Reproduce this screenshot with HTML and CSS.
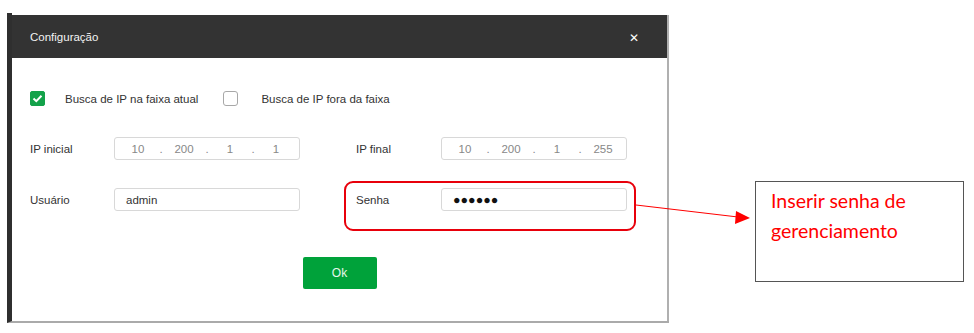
FILE: index.html
```html
<!DOCTYPE html>
<html>
<head>
<title>Configuração</title>
<meta name="viewport" content="width=device-width, initial-scale=1.0">
<link rel="stylesheet" href="styles.css">
</head>
<body>

<div class="page">
  <div class="shot">
    <div class="dialog">
      <div class="dialog-header">
        <span class="dialog-title">Configuração</span>
        <span class="dialog-close">&#x2715;</span>
      </div>

      <div class="dialog-body">
        <div class="options">
          <label class="option">
            <span class="check checked">
              <svg width="11" height="9" viewBox="0 0 11 9"><path d="M1.5 4.5 L4.3 7.2 L9.5 1.8" fill="none" stroke="#fff" stroke-width="2"/></svg>
            </span>
            <span class="option-text">Busca de IP na faixa atual</span>
          </label>
          <label class="option">
            <span class="check"></span>
            <span class="option-text">Busca de IP fora da faixa</span>
          </label>
        </div>

        <div class="row">
          <div class="field">
            <span class="field-label">IP inicial</span>
            <div class="ip-box">
              <span class="seg">10</span><span class="dot">.</span>
              <span class="seg">200</span><span class="dot">.</span>
              <span class="seg">1</span><span class="dot">.</span>
              <span class="seg">1</span>
            </div>
          </div>
          <div class="field field-right">
            <span class="field-label">IP final</span>
            <div class="ip-box">
              <span class="seg">10</span><span class="dot">.</span>
              <span class="seg">200</span><span class="dot">.</span>
              <span class="seg">1</span><span class="dot">.</span>
              <span class="seg">255</span>
            </div>
          </div>
        </div>

        <div class="row row-user">
          <div class="field">
            <span class="field-label">Usuário</span>
            <div class="text-box">admin</div>
          </div>
          <div class="field field-right field-senha">
            <span class="field-label">Senha</span>
            <div class="text-box pass">&#9679;&#9679;&#9679;&#9679;&#9679;&#9679;</div>
            <div class="highlight"></div>
          </div>
        </div>

        <div class="actions">
          <button class="btn-ok">Ok</button>
        </div>
      </div>
    </div>
  </div>

  <div class="callout">
    Inserir senha de<br>gerenciamento
  </div>

  <!-- seta da anotação -->
  <svg class="arrow" width="974" height="333" viewBox="0 0 974 333">
    <line x1="636" y1="205" x2="738" y2="217" stroke="#f00" stroke-width="1"/>
    <polygon points="736,211 750,218 735,224" fill="#f00"/>
  </svg>
</div>

</body>
</html>
```

FILE: styles.css
```css
body {
  margin: 0;
  background: #fff;
  font-family: "Liberation Sans", Arial, sans-serif;
}

.page {
  position: relative;
  display: flex;
  align-items: flex-start;
  padding: 13px 0 0 7px;
  height: 333px;
  box-sizing: border-box;
}

/* janela de fundo (borda escura) */
.shot {
  border-left: 5px solid #2f2f2f;
  padding-top: 2px;
  border-bottom: 2px solid #aaa;
}

.dialog {
  width: 657px;
  background: #fff;
  border-right: 2px solid #b0b0b0;
  box-sizing: border-box;
}

.dialog-header {
  height: 43px;
  background: #333;
  color: #f2f2f2;
  font-size: 11.5px;
  display: flex;
  align-items: center;
  justify-content: space-between;
  padding: 0 28px 0 18px;
}

.dialog-close {
  font-size: 12px;
  color: #fff;
  margin-top: 3px;
}

.dialog-body {
  padding: 33px 0 32px 18px;
  font-size: 11.5px;
  color: #333;
}

.options {
  display: flex;
  align-items: center;
  height: 15px;
}

.option {
  display: flex;
  align-items: center;
}

.option + .option {
  margin-left: 25px;
}

.check {
  width: 15px;
  height: 15px;
  box-sizing: border-box;
  border: 1px solid #a8a8a8;
  border-radius: 3px;
  background: #fff;
  display: flex;
  align-items: center;
  justify-content: center;
}

.check.checked {
  background: #13a24a;
  border-color: #13a24a;
  border-radius: 2px;
}

.option-text {
  margin-left: 20px;
}

.option + .option .option-text {
  margin-left: 23px;
}

.row {
  display: flex;
  margin-top: 31px;
}

.row-user {
  margin-top: 28px;
}

.field {
  display: flex;
  align-items: center;
  position: relative;
}

.field-label {
  width: 84px;
}

.field-right {
  margin-left: 56px;
}

.field-right .field-label {
  width: 85px;
}

.ip-box, .text-box {
  width: 186px;
  height: 23px;
  box-sizing: border-box;
  border: 1px solid #d8d8d8;
  border-radius: 3px;
  display: flex;
  align-items: center;
}

.ip-box {
  color: #888;
}

.seg {
  flex: 1;
  text-align: center;
}

.dot {
  width: 0;
  text-align: center;
  display: flex;
  justify-content: center;
}

.text-box {
  padding-left: 11px;
  color: #333;
}

.pass {
  font-size: 12.5px;
  letter-spacing: 0;
  color: #111;
}

/* destaque vermelho da anotação */
.highlight {
  position: absolute;
  left: -12px;
  top: -7px;
  width: 292px;
  height: 50px;
  box-sizing: border-box;
  border: 2px solid #e8000b;
  border-radius: 9px;
}

.actions {
  display: flex;
  justify-content: center;
  margin-top: 46px;
  padding-right: 18px;
}

.btn-ok {
  width: 74px;
  height: 32px;
  border: none;
  border-radius: 2px;
  background: #00a23a;
  color: #e8f7ec;
  font-family: "Liberation Sans", Arial, sans-serif;
  font-size: 12px;
}

.callout {
  margin: 168px 0 0 86px;
  width: 209px;
  height: 101px;
  box-sizing: border-box;
  border: 1px solid #555;
  color: #f00;
  font-family: Lato, "Open Sans", sans-serif;
  font-size: 19.5px;
  line-height: 30px;
  padding: 4px 0 0 15px;
}

.arrow {
  position: absolute;
  left: 0;
  top: 0;
  pointer-events: none;
}
```
